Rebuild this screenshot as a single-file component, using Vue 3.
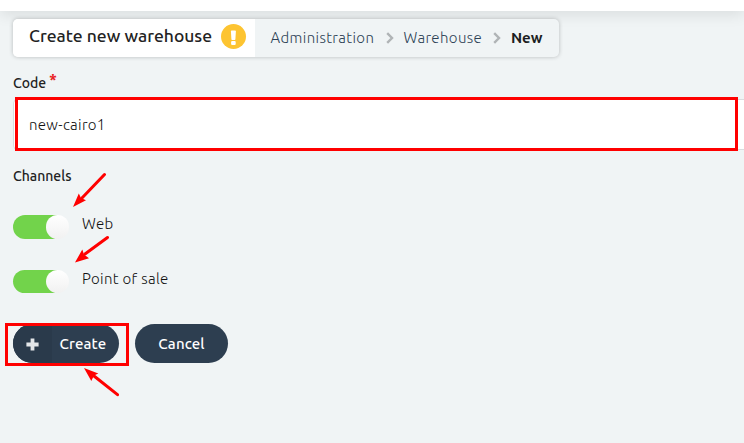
<script setup>
import { ref } from 'vue'

const code = ref('new-cairo1')
const channels = ref([
  { id: 'web', label: 'Web', on: true },
  { id: 'pos', label: 'Point of sale', on: true },
])
</script>

<template>
  <div class="page">
    <div class="topbar"></div>
    <main class="content">
      <header class="heading">
        <div class="title">
          <h1>Create new warehouse</h1>
          <svg class="alert" width="26" height="26" viewBox="0 0 26 26">
            <circle cx="12.500" cy="12.500" r="12.500" fill="#fdc431" />
            <path d="M9.900 7.300q0-.8.800-.8h3.400q.8 0 .8.800l-.5 7.900q0 .7-.7.700h-2.600q-.7 0-.7-.7z" fill="#fff" />
            <rect x="10.100" y="17" width="4.600" height="4" rx="1" fill="#fff" />
          </svg>
        </div>
        <nav class="crumbs">
          <a class="admin">Administration</a>
          <svg class="chevron" width="8" height="12" viewBox="0 0 8 12"><path d="M1.200 1.200 6 6l-4.800 4.800" /></svg>
          <a class="ware">Warehouse</a>
          <svg class="chevron" width="8" height="12" viewBox="0 0 8 12"><path d="M1.200 1.200 6 6l-4.800 4.800" /></svg>
          <span class="current">New</span>
        </nav>
      </header>

      <label class="label code-label">Code<span class="required">*</span></label>
      <div class="field"><span>{{ code }}</span></div>

      <div class="label channel-label">Channels</div>
      <div class="channels">
        <div v-for="c in channels" :key="c.id" class="channel" @click="c.on = !c.on">
          <span class="switch" :class="[c.id, { on: c.on }]"><i></i></span>
          <span class="name">{{ c.label }}</span>
        </div>
      </div>

      <div class="actions">
        <button class="btn create">
          <span class="plus">
            <svg width="13" height="13" viewBox="0 0 13 13"><path d="M6.500 .4v12.200M.4 6.500h12.200" /></svg>
          </span>
          <span class="create-text">Create</span>
        </button>
        <button class="btn cancel"><span>Cancel</span></button>
      </div>
    </main>

    <svg class="marks" width="744" height="443" viewBox="0 0 744 443">
      <rect x="16.500" y="98.500" width="720" height="51" />
      <rect x="6.500" y="324.500" width="121" height="40" />
      <path d="M104.500 174.500 82 198M107.500 237.500 85 254M117.500 394.700 94 376" />
      <g class="heads">
        <path d="M73 207 78.800 193.500 81 198 86 200.300z" />
        <path d="M75 262.500 82.300 249.500 84 254.500 89 258.300z" />
        <path d="M84 368 98.300 373.500 94 375.500 91.300 381z" />
      </g>
    </svg>
  </div>
</template>

<style>
body {
  background: #f0f4f5;
  overflow: hidden;
}
</style>

<style scoped>
.page {
  position: relative;
  box-sizing: border-box;
  width: 744px;
  height: 443px;
  overflow: hidden;
  background: #f0f4f5;
  color: #222;
  font-family: "Ubuntu", "Noto Sans", "Open Sans", sans-serif;
}
.topbar {
  height: 11px;
  background: #fff;
  box-shadow: 0 2px 15px rgba(0, 0, 0, 0.13);
}
.content {
  padding: 8px 0 0 13px;
}
.heading {
  display: flex;
  width: 546px;
  height: 38px;
  border-radius: 5px;
  overflow: hidden;
  box-shadow: 0 0 4px rgba(0, 0, 0, 0.24);
  background: #f0f4f5;
}
.title {
  display: flex;
  box-sizing: border-box;
  width: 242px;
  padding: 0 0 0 16px;
  background: #fff;
}
h1 {
  width: 192px;
  margin: 0;
  font-size: 17.500px;
  font-weight: 500;
  line-height: 34px;
  white-space: nowrap;
}
.alert {
  flex: none;
  margin-top: 5px;
}
.crumbs {
  display: flex;
  align-items: center;
  padding-left: 15.500px;
  font-size: 15px;
  font-weight: 300;
  letter-spacing: 0.380px;
  color: #2c3f54;
  white-space: nowrap;
}
.crumbs a,
.crumbs .current {
  line-height: 38px;
}
.admin {
  width: 115px;
}
.ware {
  width: 89.500px;
}
.chevron {
  flex: none;
  margin-right: 10px;
  fill: none;
  stroke: #b0b4b6;
  stroke-width: 2.400;
}
.current {
  color: #1c1e22;
  font-weight: 700;
  letter-spacing: -0.1px;
}
.label {
  display: flex;
  font-size: 14px;
  font-weight: 500;
  line-height: 20px;
  letter-spacing: 0;
}
.code-label {
  margin-top: 16px;
}
.required {
  margin: -3px 0 0 3px;
  color: #e82222;
  font-size: 16px;
  font-weight: 700;
}
.field {
  box-sizing: border-box;
  height: 51px;
  margin-top: 6px;
  padding-left: 15px;
  border: 1px solid #d9dddf;
  border-right: 0;
  border-radius: 5px 0 0 5px;
  background: #fff;
  font-size: 15px;
  font-weight: 300;
  letter-spacing: 0.330px;
  line-height: 49px;
  color: #111;
}
.channel-label {
  margin-top: 16px;
}
.channels {
  display: grid;
  gap: 31px;
  margin-top: 29px;
}
.channel {
  display: flex;
  gap: 13px;
  height: 24px;
}
.switch {
  display: flex;
  width: 56px;
  height: 24px;
  border-radius: 12px;
  background: #c9ced1;
}
.switch.pos {
  height: 23px;
}
.switch.on {
  justify-content: flex-end;
  background: linear-gradient(90deg, #72d34b 44px, transparent 44px);
}
.switch i {
  width: 23px;
  border-radius: 12px;
  background: linear-gradient(#fff, #f1f1f1);
}
.name {
  line-height: 18px;
  font-size: 15px;
  font-weight: 300;
  letter-spacing: 0.320px;
  color: #111;
}
.actions {
  display: flex;
  gap: 16px;
  margin-top: 30px;
}
.btn {
  display: flex;
  align-items: center;
  height: 39px;
  padding: 0;
  border: 0;
  border-radius: 20px;
  overflow: hidden;
  background: #2d3e50;
  color: #fff;
  font: 500 15px "Ubuntu", "Noto Sans", sans-serif;
  letter-spacing: 0.120px;
}
.create {
  width: 106px;
}
.plus {
  display: flex;
  align-items: center;
  box-sizing: border-box;
  width: 39px;
  height: 39px;
  margin-right: 7.500px;
  padding: 2px 0 0 13px;
  background: #2a3a4b;
}
.plus path {
  fill: none;
  stroke: #e3e6e9;
  stroke-width: 3.800;
}
.cancel {
  justify-content: center;
  width: 93px;
}
.marks {
  position: absolute;
  inset: 0;
  pointer-events: none;
  fill: none;
  stroke: #f00;
  stroke-width: 3;
}
.marks path {
  stroke-width: 3;
  stroke-linecap: round;
}
.marks .heads path {
  fill: #f00;
  stroke: none;
}
</style>
